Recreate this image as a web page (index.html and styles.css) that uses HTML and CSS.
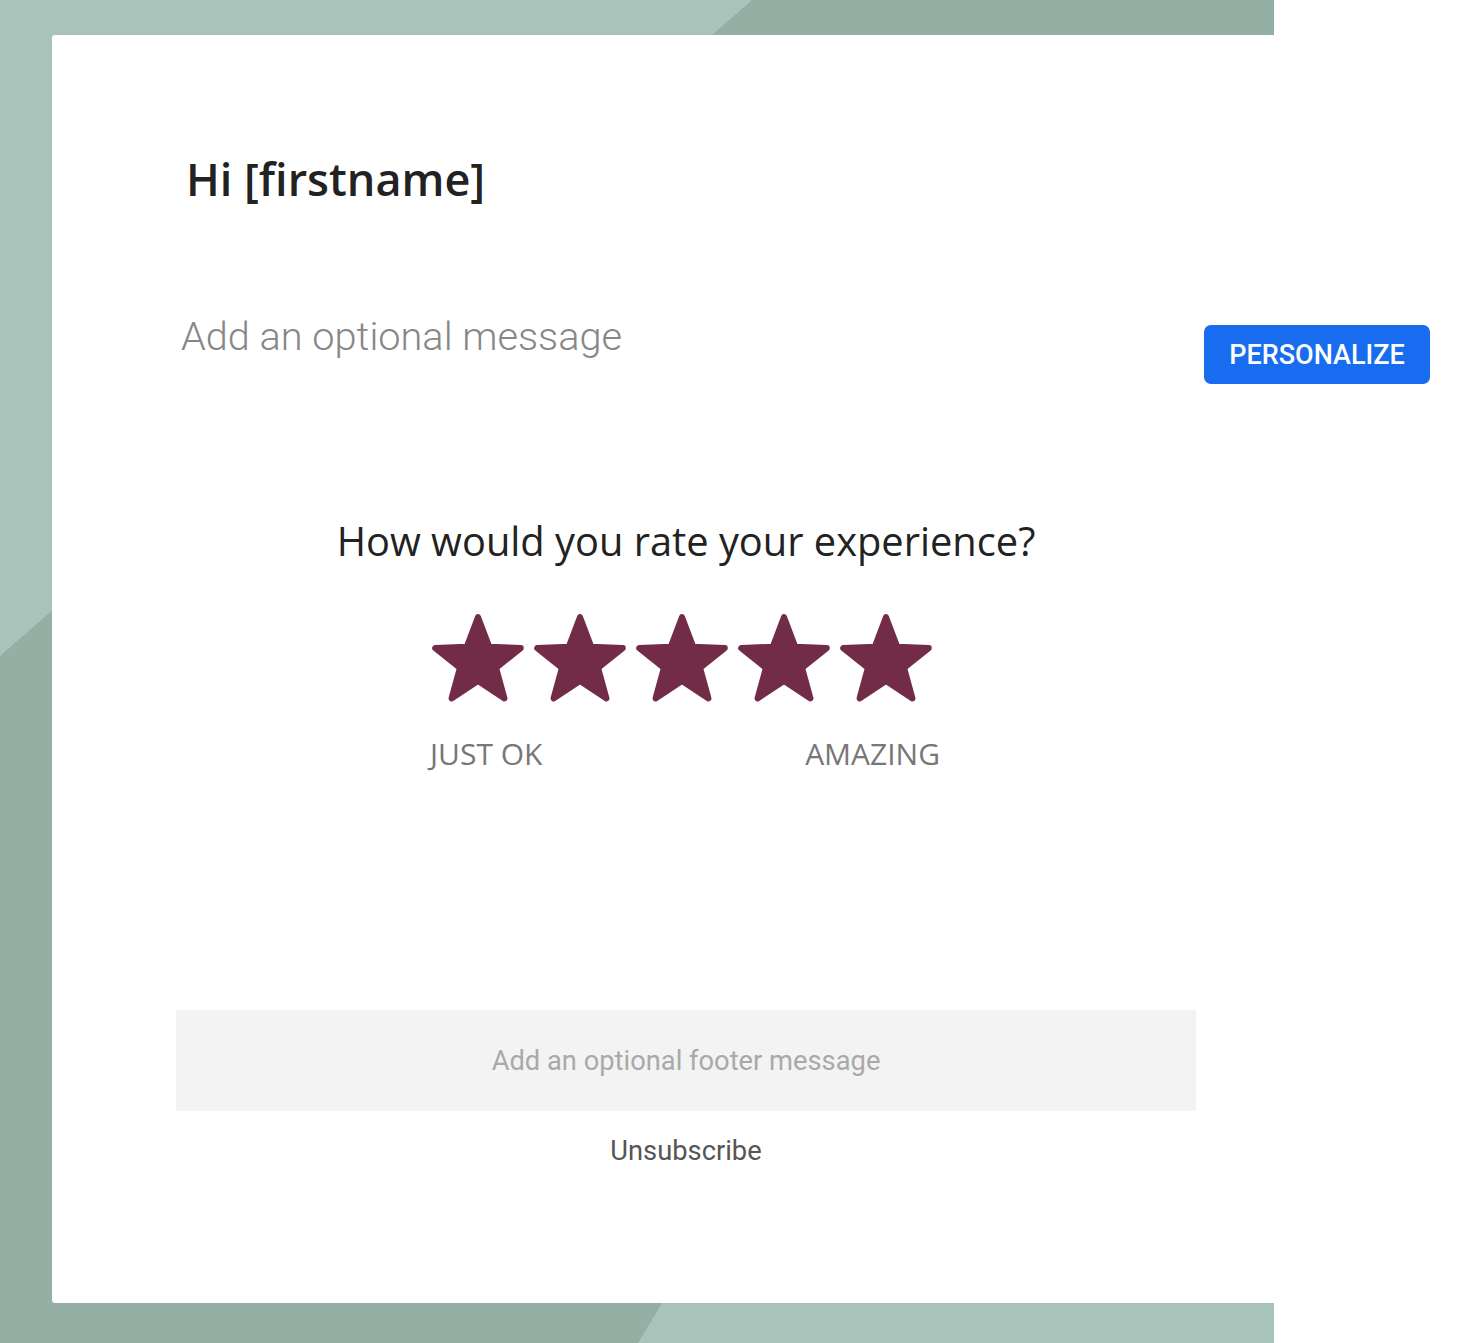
FILE: index.html
```html
<!DOCTYPE html>
<html lang="en">
<head>
<meta charset="utf-8">
<title>Rating email</title>
<link rel="stylesheet" href="styles.css">
</head>
<body>
<div class="page">
  <div class="card">
    <h1 class="greeting">Hi [firstname]</h1>
    <p class="message">Add an optional message</p>
    <h2 class="question">How would you rate your experience?</h2>
    <div class="rating">
      <div class="stars">
        <svg class="star" viewBox="2 0 100 96" width="100" height="96"><path d="M50 5 L61.17 34.63 L92.8 36.1 L68.07 55.87 L76.45 86.4 L50 69 L23.55 86.4 L31.93 55.87 L7.2 36.1 L38.83 34.63 Z"/></svg>
        <svg class="star" viewBox="2 0 100 96" width="100" height="96"><path d="M50 5 L61.17 34.63 L92.8 36.1 L68.07 55.87 L76.45 86.4 L50 69 L23.55 86.4 L31.93 55.87 L7.2 36.1 L38.83 34.63 Z"/></svg>
        <svg class="star" viewBox="2 0 100 96" width="100" height="96"><path d="M50 5 L61.17 34.63 L92.8 36.1 L68.07 55.87 L76.45 86.4 L50 69 L23.55 86.4 L31.93 55.87 L7.2 36.1 L38.83 34.63 Z"/></svg>
        <svg class="star" viewBox="2 0 100 96" width="100" height="96"><path d="M50 5 L61.17 34.63 L92.8 36.1 L68.07 55.87 L76.45 86.4 L50 69 L23.55 86.4 L31.93 55.87 L7.2 36.1 L38.83 34.63 Z"/></svg>
        <svg class="star" viewBox="2 0 100 96" width="100" height="96"><path d="M50 5 L61.17 34.63 L92.8 36.1 L68.07 55.87 L76.45 86.4 L50 69 L23.55 86.4 L31.93 55.87 L7.2 36.1 L38.83 34.63 Z"/></svg>
      </div>
      <div class="labels">
        <span>JUST OK</span>
        <span>AMAZING</span>
      </div>
    </div>
    <div class="footer-box">Add an optional footer message</div>
    <div class="unsubscribe">Unsubscribe</div>
  </div>
  <button class="personalize" type="button">PERSONALIZE</button>
</div>
</body>
</html>
```

FILE: styles.css
```css
* { box-sizing: border-box; }

html, body {
  margin: 0;
  padding: 0;
  background: #ffffff;
}

.page {
  position: relative;
  width: 1480px;
  height: 1343px;
  padding-top: 35px;
  overflow: hidden;
  background-color: #ffffff;
  background-image:
    linear-gradient(to bottom right, #a8c3b9 50%, rgba(168,195,185,0) 50%),
    linear-gradient(to top left, #a8c3b9 50%, rgba(168,195,185,0) 50%),
    linear-gradient(#94afa4, #94afa4);
  background-size: 752px 656px, 636px 1060px, 1274px 100%;
  background-position: 0 0, 638px 283px, 0 0;
  background-repeat: no-repeat;
}

.card {
  margin-left: 52px;
  width: 1268px;
  height: 1268px;
  background: #ffffff;
  border-radius: 3px;
  padding: 114px 124px 0;
  display: flex;
  flex-direction: column;
}

.greeting {
  margin: 0;
  padding-left: 10px;
  font-family: "Open Sans", sans-serif;
  font-weight: 600;
  font-size: 45px;
  line-height: 60px;
  color: #222222;
}

.message {
  margin: 103px 0 0;
  padding-left: 5px;
  font-family: Roboto, sans-serif;
  font-weight: 300;
  font-size: 39.7px;
  line-height: 50px;
  color: #878787;
}

.question {
  margin: 152px 0 0;
  text-align: center;
  font-family: "Open Sans", sans-serif;
  font-weight: 400;
  font-size: 39.8px;
  line-height: 54px;
  color: #222222;
}

.rating {
  align-self: center;
  width: 512px;
  margin-top: 44px;
  display: flex;
  flex-direction: column;
}

.stars {
  display: flex;
  gap: 2px;
}

.star {
  display: block;
  fill: #722c48;
  stroke: #722c48;
  stroke-width: 6;
  stroke-linejoin: round;
}

.labels {
  margin-top: 26px;
  display: flex;
  justify-content: space-between;
  font-family: "Open Sans", sans-serif;
  font-size: 30px;
  line-height: 40px;
  color: #777777;
  padding-right: 2px;
}

.footer-box {
  margin-top: 236px;
  height: 101px;
  background: #f3f3f3;
  display: flex;
  align-items: center;
  justify-content: center;
  font-family: Roboto, sans-serif;
  font-size: 27.3px;
  color: #a9a9a9;
}

.unsubscribe {
  margin-top: 22px;
  text-align: center;
  font-family: Roboto, sans-serif;
  font-size: 27.3px;
  line-height: 36px;
  color: #555555;
}

.personalize {
  position: absolute;
  left: 1204px;
  top: 325px;
  width: 226px;
  height: 59px;
  border: none;
  border-radius: 7px;
  background: #176cef;
  color: #ffffff;
  font-family: Roboto, sans-serif;
  font-weight: 500;
  font-size: 27px;
  padding: 0;
  cursor: pointer;
}
```
